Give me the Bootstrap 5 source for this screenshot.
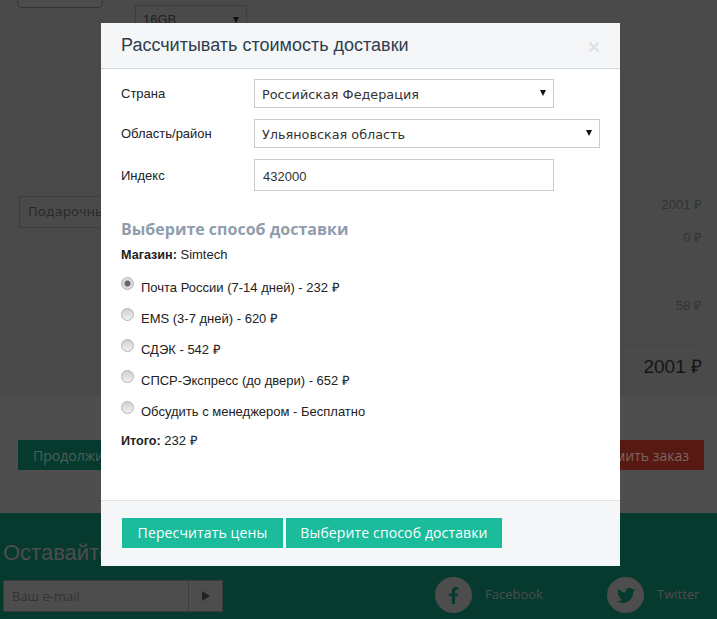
<!DOCTYPE html>
<html lang="ru">
<head>
  <meta charset="UTF-8">
  <title>Рассчитывать стоимость доставки</title>
  <link href="https://cdn.jsdelivr.net/npm/bootstrap@5.3.0/dist/css/bootstrap.min.css" rel="stylesheet">
  <style>
    html, body {
      height: 619px;
      overflow: hidden;
    }

    body {
      font-family: "Liberation Sans", sans-serif;
      font-size: 13px;
      background-color: #4d4e4d;
      color: #333;
    }

    /* page under the modal, in its dimmed colours */
    .order-top {
      height: 396px;
      background-color: #4a4a4a;
      padding: 0 15px 0 17px;
    }

    .order-left {
      width: 240px;
    }

    .gallery-btn {
      width: 86px;
      height: 9px;
      margin-top: -1px;
      background: #4c4c4c;
      border: 1px solid #333;
      border-radius: 0 0 5px 5px;
    }

    .gallery-btn-next {
      width: 86px;
      height: 14px;
      margin-top: 1px;
      background: #494949;
      border-radius: 5px 5px 0 0;
    }

    .memory-select, .field-select {
      appearance: none;
      background-image: url("data:image/svg+xml,%3Csvg xmlns='http://www.w3.org/2000/svg' width='6' height='6'%3E%3Cpath d='M0 0h6L3 6z' fill='%23111'/%3E%3C/svg%3E");
      background-repeat: no-repeat;
    }

    .memory-select {
      width: 112px;
      height: 30px;
      margin: 5px 0 0 32px;
      border: 1px solid #3d3d3d;
      background-color: #4a4a4a;
      background-position: right 7px top 11px;
      color: #222;
      font-size: 13px;
      padding: 0 7px;
    }

    .gift-input {
      width: 200px;
      height: 32px;
      margin: 161px 0 0 2px;
      border: 1px solid #3d3d3d;
      background: #4a4a4a;
      color: #2a2a2a;
      font-family: "DejaVu Sans", sans-serif;
      font-size: 13px;
      line-height: 30px;
      padding: 0 8px;
    }

    .price-col {
      width: 200px;
      text-align: right;
      padding-top: 197px;
      color: #303438;
    }

    .price-line {
      height: 16px;
      line-height: 16px;
      margin-bottom: 17px;
    }

    .price-gap {
      height: 18px;
    }

    .price-last {
      margin-bottom: 31px;
    }

    .price-total {
      padding-top: 9px;
      border-top: 1px solid #444;
      font-size: 19px;
      line-height: 24px;
      color: #151515;
    }

    .order-actions {
      height: 117px;
      padding: 44px 13px 0 18px;
    }

    .continue-btn, .submit-btn {
      height: 30px;
      border-radius: 0;
      border: 0;
      font-family: "Open Sans", sans-serif;
      font-size: 14px;
      padding: 0 15px;
    }

    .continue-btn, .continue-btn:hover {
      background-color: #073a2e;
      color: #4b5f59;
    }

    .submit-btn, .submit-btn:hover {
      background-color: #561a12;
      color: #7d6560;
    }

    .site-footer {
      height: 106px;
      background-color: #073a2e;
      color: #4d4d4d;
      padding: 27px 0 0 3px;
    }

    .footer-title {
      font-family: "Liberation Sans", sans-serif;
      font-size: 22px;
      line-height: 26px;
      margin: 0;
      white-space: nowrap;
    }

    .mail-box {
      width: 220px;
      height: 32px;
      margin-top: 14px;
      border: 1px solid #3c3c3c;
      background: #4d4d4d;
    }

    .mail-input {
      width: 186px;
      padding: 0 8px;
      line-height: 30px;
      color: #333;
      font-family: "Open Sans", sans-serif;
      font-size: 13px;
      border-right: 1px solid #3c3c3c;
    }

    .mail-send {
      width: 33px;
    }

    .social-list {
      margin: 37px 0 0 192px;
    }

    .social-item {
      gap: 13px;
      font-family: "Open Sans", sans-serif;
      font-size: 13px;
    }

    .social-first {
      width: 172px;
    }

    .social-dot {
      width: 37px;
      height: 36px;
      border-radius: 50%;
      background: #4d4d4d;
    }

    /* modal */
    .delivery-dialog {
      width: 519px;
      max-width: 519px;
      margin: 23px 0 0 101px;
    }

    .delivery-content {
      border: 0;
      border-radius: 0;
      height: 543px;
      color: #222;
    }

    .delivery-header {
      height: 46px;
      padding: 0 20px;
      background-color: #f4f6f8;
      border-bottom: 1px solid #cfd6de;
      border-radius: 0;
    }

    .delivery-title {
      font-family: "Liberation Sans", sans-serif;
      font-size: 18px;
      color: #2f3e4e;
      margin: 0;
    }

    .close-x {
      border: 0;
      background: none;
      padding: 0;
      margin-top: 2px;
      font-family: "Liberation Sans", sans-serif;
      font-size: 21px;
      font-weight: 700;
      line-height: 1;
      color: #dfe2e5;
    }

    .delivery-body {
      padding: 10px 20px 0;
    }

    .delivery-body strong {
      font-size: 12.6px;
    }

    .field-row {
      margin-bottom: 11px;
    }

    .field-label {
      width: 133px;
      flex-shrink: 0;
      color: #222;
      font-size: 13px;
    }

    .field-low {
      padding-top: 2px;
    }

    .field-select, .field-input {
      height: 29px;
      border: 1px solid #c6cdd5;
      border-radius: 0;
      background-color: #fff;
      color: #333;
      font-family: "DejaVu Sans", sans-serif;
      font-size: 12.8px;
      padding: 2px 0 0 7px;
    }

    .field-select {
      background-position: right 7px top 10px;
    }

    .field-input {
      height: 32px;
      width: 300px;
      font-family: "Liberation Sans", sans-serif;
      font-size: 13px;
      padding: 2px 8px 0;
    }

    .w-short {
      width: 300px;
    }

    .w-long {
      width: 346px;
    }

    .method-title {
      font-family: "Open Sans", sans-serif;
      font-size: 16px;
      font-weight: 700;
      line-height: 22px;
      color: #8f9dac;
      margin: 27px 0 0;
    }

    .store-line {
      margin: 6px 0 0;
      line-height: 18px;
    }

    .ship-list {
      margin-top: 8px;
    }

    .ship-item {
      height: 31px;
      gap: 7px;
      margin: 0;
    }

    .ship-radio {
      appearance: none;
      width: 13px;
      height: 13px;
      margin: -8px 0 0;
      flex-shrink: 0;
      border: 1px solid #b4b4b4;
      border-radius: 50%;
      background: linear-gradient(#cfcfcf, #f2f2f2);
    }

    .ship-radio:checked {
      background: radial-gradient(circle, #666 0 2.5px, #dcdcdc 3.5px);
    }

    .total-line {
      margin: 5px 0 0;
      line-height: 18px;
    }

    .delivery-footer {
      height: 66px;
      margin-top: auto;
      padding: 0 0 2px 21px;
      gap: 3px;
      background-color: #f4f6f8;
      border-top: 1px solid #dfe3e8;
      border-radius: 0;
      justify-content: flex-start;
    }

    .teal-btn {
      height: 30px;
      margin: 0;
      padding: 0;
      border: 0;
      border-radius: 0;
      background-color: #1abc9c;
      color: #fff;
      font-family: "Open Sans", sans-serif;
      font-size: 14px;
      letter-spacing: .13px;
    }

    .recalc-btn {
      width: 161px;
    }

    .choose-btn {
      width: 216px;
    }
  </style>
</head>
<body>
  <!-- page under the modal -->
  <div class="order-top d-flex justify-content-between">
    <div class="order-left">
      <div class="d-flex">
        <div>
          <div class="gallery-btn"></div>
          <div class="gallery-btn-next"></div>
        </div>
        <select class="memory-select"><option>16GB</option></select>
      </div>
      <div class="gift-input">Подарочный</div>
    </div>
    <div class="price-col">
      <div class="price-line">2001 ₽</div>
      <div class="price-line">0 ₽</div>
      <div class="price-line price-gap"></div>
      <div class="price-line price-last">58 ₽</div>
      <div class="price-total">2001 ₽</div>
    </div>
  </div>
  <div class="order-actions d-flex justify-content-between">
    <button class="btn continue-btn">Продолжить покупки</button>
    <button class="btn submit-btn">Оформить заказ</button>
  </div>
  <div class="site-footer d-flex">
    <div class="order-left">
      <h2 class="footer-title">Оставайтесь на связи</h2>
      <div class="mail-box d-flex">
        <div class="mail-input">Ваш e-mail</div>
        <div class="mail-send d-flex align-items-center justify-content-center">
          <svg width="10" height="12" viewBox="0 0 10 12"><path d="M1 1l8 5-8 5z" fill="#222"/></svg>
        </div>
      </div>
    </div>
    <div class="social-list d-flex align-items-start">
      <div class="social-item social-first d-flex align-items-center">
        <div class="social-dot d-flex align-items-center justify-content-center">
          <svg width="10" height="17" viewBox="0 0 14 24"><path d="M4 24V13H0V9h4V6c0-4 2.400-6 5.800-6H13v4h-2c-1.800 0-2.500.8-2.500 2.500V9h4.300l-.6 4H8.500v11z" fill="#073a2e"/></svg>
        </div>
        <span>Facebook</span>
      </div>
      <div class="social-item d-flex align-items-center">
        <div class="social-dot d-flex align-items-center justify-content-center">
          <svg width="18" height="15" viewBox="0 0 24 20"><path d="M24 2.400c-.9.400-1.800.7-2.800.8 1-.6 1.800-1.600 2.200-2.700-1 .6-2 1-3.100 1.200A4.900 4.900 0 0 0 11.800 6.200C7.700 6 4.100 4 1.700.9.400 3.100 1 6 3.200 7.500c-.8 0-1.600-.2-2.200-.6 0 2.400 1.700 4.400 3.900 4.900-.7.200-1.500.2-2.200.1.600 2 2.400 3.400 4.600 3.400A9.900 9.900 0 0 1 0 17.800 13.900 13.900 0 0 0 7.500 20c9.100 0 14.300-7.700 14-14.600 1-.7 1.800-1.600 2.500-3z" fill="#073a2e"/></svg>
        </div>
        <span>Twitter</span>
      </div>
    </div>
  </div>

  <div class="modal d-block">
    <div class="modal-dialog delivery-dialog">
      <div class="modal-content delivery-content">
        <div class="modal-header delivery-header">
          <h4 class="modal-title delivery-title">Рассчитывать стоимость доставки</h4>
          <button type="button" class="close-x">×</button>
        </div>
        <div class="delivery-body">
          <div class="field-row d-flex align-items-center">
            <label class="field-label">Страна</label>
            <select class="field-select w-short"><option>Российская Федерация</option></select>
          </div>
          <div class="field-row d-flex align-items-center">
            <label class="field-label">Область/район</label>
            <select class="field-select w-long"><option>Ульяновская область</option></select>
          </div>
          <div class="field-row d-flex align-items-center">
            <label class="field-label field-low">Индекс</label>
            <input type="text" class="field-input" value="432000">
          </div>

          <h3 class="method-title">Выберите способ доставки</h3>
          <p class="store-line"><strong>Магазин:</strong> Simtech</p>

          <div class="ship-list">
            <label class="ship-item d-flex align-items-center"><input type="radio" name="ship" class="ship-radio" checked> Почта России (7-14 дней) - 232 ₽</label>
            <label class="ship-item d-flex align-items-center"><input type="radio" name="ship" class="ship-radio"> EMS (3-7 дней) - 620 ₽</label>
            <label class="ship-item d-flex align-items-center"><input type="radio" name="ship" class="ship-radio"> СДЭК - 542 ₽</label>
            <label class="ship-item d-flex align-items-center"><input type="radio" name="ship" class="ship-radio"> СПСР-Экспресс (до двери) - 652 ₽</label>
            <label class="ship-item d-flex align-items-center"><input type="radio" name="ship" class="ship-radio"> Обсудить с менеджером - Бесплатно</label>
          </div>

          <p class="total-line"><strong>Итого:</strong> 232 ₽</p>
        </div>
        <div class="modal-footer delivery-footer">
          <button class="teal-btn recalc-btn">Пересчитать цены</button>
          <button class="teal-btn choose-btn">Выберите способ доставки</button>
        </div>
      </div>
    </div>
  </div>

  <script src="https://cdn.jsdelivr.net/npm/bootstrap@5.3.0/dist/js/bootstrap.bundle.min.js"></script>
</body>
</html>
